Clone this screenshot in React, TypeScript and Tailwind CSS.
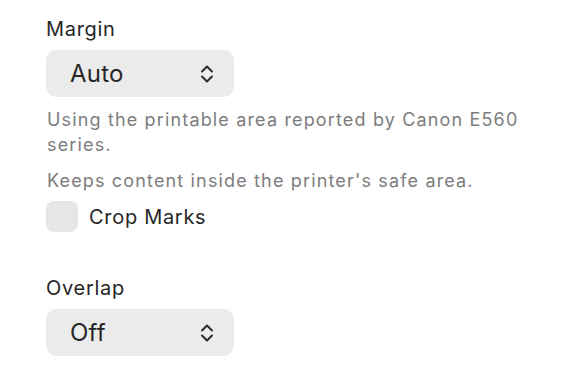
const Chevrons = () => (
  <svg width="14" height="20" viewBox="0 0 14 20" fill="none" className="shrink-0">
    <path d="M2 7.5 L7 2.5 L12 7.5" stroke="#2a2a2a" strokeWidth="2" strokeLinecap="round" strokeLinejoin="round" />
    <path d="M2 12.5 L7 17.5 L12 12.5" stroke="#2a2a2a" strokeWidth="2" strokeLinecap="round" strokeLinejoin="round" />
  </svg>
);

const Select = ({ value }: { value: string }) => (
  <button className="flex h-[47px] w-[188px] items-center justify-between rounded-[11px] bg-[#ebebeb] pl-6 pr-5 text-[24px] tracking-[0.01em] text-[#262626]">
    <span>{value}</span>
    <Chevrons />
  </button>
);

const Label = ({ children }: { children: React.ReactNode }) => (
  <div className="text-[20px] leading-[28px] tracking-[0.035em] text-[#262626]">{children}</div>
);

export default function App() {
  return (
    <div
      className="h-[390px] w-[576px] bg-white pl-[46px] pt-[15px]"
      style={{ fontFamily: "Inter, 'Noto Sans', sans-serif" }}
    >
      <div className="flex flex-col gap-[7px]">
        <Label>Margin</Label>
        <Select value="Auto" />
      </div>
      <div className="mt-[10px] flex w-[490px] flex-col gap-[11px] pl-px text-[18px] leading-[25px] tracking-[0.064em] text-[#7d7d7d]">
        <p>Using the printable area reported by Canon E560 series.</p>
        <p>Keeps content inside the printer's safe area.</p>
      </div>
      <label className="mt-[8px] flex items-center gap-[11px]">
        <span className="h-[31px] w-[32px] rounded-[8px] bg-[#e6e6e6]" />
        <span className="text-[20px] leading-[28px] tracking-[0.035em] text-[#262626]">Crop Marks</span>
      </label>
      <div className="mt-[42px] flex flex-col gap-[7px]">
        <Label>Overlap</Label>
        <Select value="Off" />
      </div>
    </div>
  );
}
